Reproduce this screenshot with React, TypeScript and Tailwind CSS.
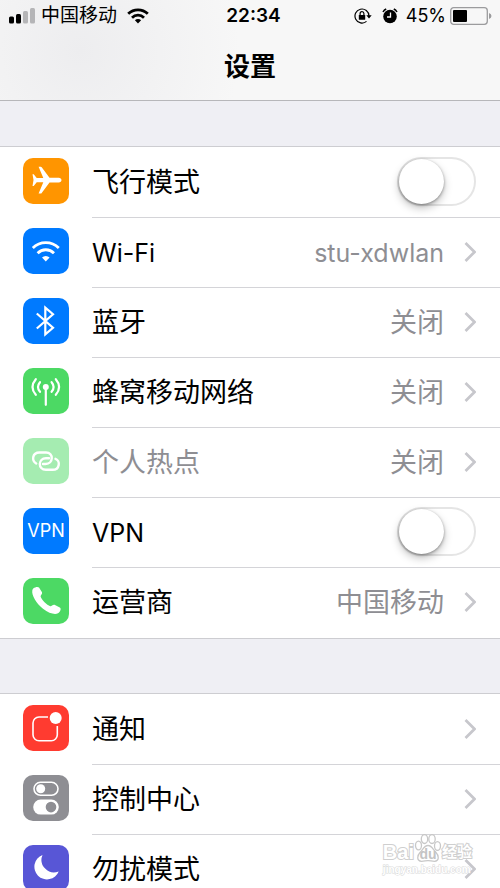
import type { ReactNode } from "react";
import { clsx } from "clsx";

type Row = {
  id: string;
  label: string;
  color: string;
  icon: ReactNode;
  value?: string;
  toggle?: boolean;
  disabled?: boolean;
  latin?: boolean;
};

const PlaneIcon = () => (
  <svg viewBox="0 0 46 46" className="size-full" fill="#fff">
    <path d="M9.5 16.2h1.2l3 3.7h6.6L15.6 8.8h2.2q.5 0 .9.5l7.8 10.4h9.2c1.7 0 2.8 1.2 2.8 2.4s-1.1 2.4-2.8 2.4h-9.2l-7.8 10.4q-.4.5-.9.5h-2.2l4.7-11.1h-6.6l-3 3.7H9.5l1-5.9z" />
  </svg>
);

const WifiIcon = () => (
  <svg viewBox="0 0 46 46" className="size-full" fill="none" stroke="#fff" strokeWidth="2.8">
    <path d="M9.8 20A18.6 18.6 0 0 1 35.8 20" />
    <path d="M14.6 25.2A11.5 11.5 0 0 1 31 25.2" />
    <path d="M19 29.6a5.4 5.4 0 0 1 7.6 0L22.8 33.5z" fill="#fff" stroke="none" />
  </svg>
);

const BluetoothIcon = () => (
  <svg viewBox="0 0 46 46" className="size-full" fill="none" stroke="#fff" strokeWidth="2.2">
    <path d="M13.8 15.5L30 29.8L22.3 36.3V9.7L30 16.2L13.8 30.5" />
  </svg>
);

const CellularIcon = () => (
  <svg viewBox="0 0 46 46" className="size-full" fill="none" stroke="#fff" strokeWidth="2.2" strokeLinecap="round">
    <circle cx="22.8" cy="19" r="3" fill="#fff" stroke="none" />
    <path d="M22.8 20V36.8" />
    <path d="M17 14.2q-4 4.8 0 9.6M28.6 14.2q4 4.8 0 9.6" />
    <path d="M12.8 11.2q-6.6 7.8 0 15.6M32.8 11.2q6.6 7.8 0 15.6" />
  </svg>
);

const HotspotIcon = () => (
  <svg viewBox="0 0 46 46" className="size-full" fill="none" stroke="#fff" strokeWidth="2.4" strokeLinecap="round">
    <path d="M13.2 25.5C8.5 23 9 14.5 16.5 14.5H23C31 14.5 30.5 26 22.5 26H20" />
    <path d="M32.5 20.8C37.5 22.5 37 31.8 29.5 31.8H23C14.5 31.8 15 20.2 23 20.2H26" />
  </svg>
);

const PhoneIcon = () => (
  <svg viewBox="0 0 46 46" className="size-full" fill="#fff">
    <path d="M10.5 10.3C12 9 15 8.3 16 9.5L19 14.3C19.7 16 17.4 17.3 17.6 18.5C18.5 22 24 27 27.2 28.2C28.6 28.5 29.6 26.4 31.5 26.8L36.8 29.5C38.7 30.8 37.2 33.8 35 35.3C32 37 26 35.5 20 30.8C13 25 8.5 17.3 9.3 12.5C9.4 11.6 9.8 10.8 10.5 10.3z" />
  </svg>
);

const NotificationIcon = () => (
  <svg viewBox="0 0 46 46" className="size-full" fill="none" stroke="#fff" strokeWidth="1.6">
    <path d="M25 12H16a6 6 0 0 0-6 6V29.7a6 6 0 0 0 6 6H28.3a6 6 0 0 0 6-6V21" />
    <circle cx="32.7" cy="13" r="6" fill="#fff" stroke="none" />
  </svg>
);

const ControlIcon = () => (
  <svg viewBox="0 0 46 46" className="size-full">
    <rect x="11" y="7.3" width="24" height="13" rx="6.5" fill="none" stroke="#fff" strokeWidth="1.6" />
    <circle cx="17.7" cy="13.8" r="4.5" fill="#fff" />
    <rect x="10.2" y="24.6" width="25.6" height="15" rx="7.5" fill="#fff" />
    <circle cx="28" cy="32.1" r="5.3" fill="#8e8e93" />
  </svg>
);

const MoonIcon = () => (
  <svg viewBox="0 0 46 46" className="size-full" fill="#fff">
    <path d="M19.5 10A12.6 12.6 0 1 0 35.7 26.4A12.5 12.5 0 0 1 19.5 10z" />
  </svg>
);

const network: Row[] = [
  { id: "airplane", label: "飞行模式", color: "bg-[#ff9500]", icon: <PlaneIcon />, toggle: true },
  { id: "wifi", label: "Wi-Fi", color: "bg-[#007aff]", icon: <WifiIcon />, value: "stu-xdwlan", latin: true },
  { id: "bluetooth", label: "蓝牙", color: "bg-[#007aff]", icon: <BluetoothIcon />, value: "关闭" },
  { id: "cellular", label: "蜂窝移动网络", color: "bg-[#4cd964]", icon: <CellularIcon />, value: "关闭" },
  { id: "hotspot", label: "个人热点", color: "bg-[#a5ecb1]", icon: <HotspotIcon />, value: "关闭", disabled: true },
  { id: "vpn", label: "VPN", color: "bg-[#007aff]", icon: "VPN", toggle: true, latin: true },
  { id: "carrier", label: "运营商", color: "bg-[#4cd964]", icon: <PhoneIcon />, value: "中国移动" },
];

const system: Row[] = [
  { id: "notifications", label: "通知", color: "bg-[#ff3b30]", icon: <NotificationIcon /> },
  { id: "control", label: "控制中心", color: "bg-[#8e8e93]", icon: <ControlIcon /> },
  { id: "dnd", label: "勿扰模式", color: "bg-[#5856d6]", icon: <MoonIcon /> },
];

function StatusBar() {
  return (
    <div className="grid h-8 grid-cols-[1fr_auto_1fr] items-center pr-2 pl-[9px] text-lg leading-8">
      <div className="flex items-center">
        <svg viewBox="0 0 26 16" className="h-4 w-[26px]">
          <rect x="0" y="8.5" width="5" height="7" rx="1.5" />
          <rect x="7" y="6" width="5" height="9.5" rx="1.5" />
          <rect x="14" y="3" width="5" height="12.5" rx="1.5" fill="#b5b5b7" />
          <rect x="21" y="0" width="5" height="15.5" rx="1.5" fill="#b5b5b7" />
        </svg>
        <span className="ml-1.5 text-[19px]">中国移动</span>
        <svg viewBox="0 0 22 16" className="ml-2.5 h-4 w-[22px]" fill="none" stroke="#000" strokeWidth="2.8">
          <path d="M1.2 5.8A14 14 0 0 1 20.8 5.8" />
          <path d="M5 9.7A8.5 8.5 0 0 1 17 9.7" />
          <path d="M7.9 12.3a4.4 4.4 0 0 1 6.2 0L11 15.5z" fill="#000" stroke="none" />
        </svg>
      </div>
      <time className="pl-1.5 text-[19px] font-semibold">22:34</time>
      <div className="flex items-center justify-end">
        <svg viewBox="0 0 18 16" className="h-4 w-[18px]" fill="none" stroke="#000" strokeWidth="1.2">
          <path d="M15 8A7 7 0 1 0 12.5 13.4" />
          <path d="M12.3 7.2h5.4L15 10.6z" fill="#000" stroke="none" />
          <rect x="4.8" y="7" width="6.4" height="4.8" rx="0.6" fill="#000" stroke="none" />
          <path d="M6.1 7.2V5.6a1.9 1.9 0 0 1 3.8 0V7.2" />
        </svg>
        <svg viewBox="0 0 16 16" className="ml-2.5 size-4" fill="none" stroke="#000">
          <circle cx="8" cy="8.5" r="6.8" fill="#000" stroke="none" />
          <path d="M1 4A7 7 0 0 1 4.2 1M11.8 1A7 7 0 0 1 15 4" strokeWidth="1.5" />
          <path d="M8.5 4.5V9H5" stroke="#f7f7f7" strokeWidth="1.3" />
        </svg>
        <span className="ml-2">45%</span>
        <svg viewBox="0 0 42 18" className="ml-1 h-[18px] w-[42px]">
          <rect x="0.7" y="0.7" width="36.6" height="16.6" rx="3" fill="none" stroke="#9b9b9d" strokeWidth="1.3" />
          <rect x="3" y="3" width="14" height="12" rx="1" />
          <path d="M39 6v6q2.5-1 2.5-3T39 6z" fill="#9b9b9d" />
        </svg>
      </div>
    </div>
  );
}

function SettingsRow({ row, last }: { row: Row; last: boolean }) {
  const content = (
    <>
      <span
        className={clsx(
          "mt-2.5 flex size-[46px] shrink-0 items-center justify-center overflow-hidden rounded-[10px] text-lg text-white",
          row.color
        )}
      >
        {row.icon}
      </span>
      <span
        className={clsx(
          "ml-[23px] flex h-[70px] flex-1 items-center border-b pr-6 pb-0.5",
          row.latin && "text-[25px]",
          last ? "border-transparent" : "border-[#d4d4d8]"
        )}
      >
        <span className={clsx("flex-1 pt-0.5 text-left", row.disabled ? "text-[#8e8e93]" : "text-black")}>
          {row.label}
        </span>
        {row.value && <span className="pt-0.5 text-[#8e8e93]">{row.value}</span>}
        {row.toggle ? (
          <input
            id={row.id}
            type="checkbox"
            role="switch"
            className="h-[49px] w-[79px] shrink-0 appearance-none rounded-full border-2 border-[#e5e5e5] bg-white before:block before:size-[45px] before:rounded-full before:bg-white before:shadow-[0_4px_8px_rgba(0,0,0,0.25),0_1px_3px_rgba(0,0,0,0.35)] checked:bg-[#4cd964] checked:before:ml-[30px]"
          />
        ) : (
          <svg viewBox="0 0 12 20" className="ml-5 h-5 w-3 shrink-0" fill="none" stroke="#c7c7cc" strokeWidth="2.7">
            <path d="M1.5 1L10.5 10L1.5 19" />
          </svg>
        )}
      </span>
    </>
  );

  return (
    <li>
      {row.toggle ? (
        <label htmlFor={row.id} className="flex w-full pl-[23px]">
          {content}
        </label>
      ) : (
        <button type="button" disabled={row.disabled} className="flex w-full pl-[23px]">
          {content}
        </button>
      )}
    </li>
  );
}

function Group({ rows }: { rows: Row[] }) {
  return (
    <ul className="border-y border-[#cdcdd1] bg-white pt-px">
      {rows.map((row, i) => (
        <SettingsRow key={row.id} row={row} last={i === rows.length - 1} />
      ))}
    </ul>
  );
}

function Watermark() {
  return (
    <div className="pointer-events-none absolute right-7 bottom-2.5 font-['Liberation_Sans','Noto_Sans_CJK_SC',sans-serif] font-bold whitespace-nowrap text-white [-webkit-text-stroke:2px_#cfcfcf] [paint-order:stroke_fill]">
      <div className="flex h-7 items-end">
        <span className="text-xl leading-5">Bai</span>
        <span className="relative flex size-7 shrink-0 items-end justify-center text-sm leading-4">
          <svg
            viewBox="0 0 28 28"
            className="absolute inset-0 size-7 [paint-order:normal]"
            fill="#fff"
            stroke="#c8c8c8"
            strokeWidth="1.3"
          >
            <ellipse cx="4.5" cy="11.5" rx="3" ry="4.3" />
            <ellipse cx="10.5" cy="5" rx="3.2" ry="4.5" />
            <ellipse cx="18" cy="5" rx="3.2" ry="4.5" />
            <ellipse cx="23.5" cy="12" rx="3" ry="4.3" />
            <path d="M14 11.5c4 0 5 4 8 7s3.5 8.500-1.500 8.800c-3 0-4-.6-6.500-.6s-3.500.6-6.500.6c-5-.3-4.500-5.800-1.500-8.800s4-7 8-7z" />
          </svg>
          <span className="relative text-[#c4c4c4] [-webkit-text-stroke:0]">du</span>
        </span>
        <span className="text-[15px] leading-5">经验</span>
      </div>
      <div className="text-[10px] leading-4 [-webkit-text-stroke:1px_#d8d8d8]">jingyan.baidu.com</div>
    </div>
  );
}

export default function App() {
  return (
    <main className="relative h-screen overflow-hidden bg-[#efeff4] font-['Inter','Noto_Sans_CJK_SC',sans-serif] text-black">
      <header className="border-b border-[#b7b7ba] bg-[#f7f7f7] bg-[radial-gradient(circle_at_16%_50%,#ededef_0%,#f7f7f7_160px)]">
        <StatusBar />
        <h1 className="flex h-[68px] items-center justify-center text-[26px] font-bold">设置</h1>
      </header>
      <div className="flex flex-col gap-[54px] pt-[45px] text-[27px] leading-10">
        <Group rows={network} />
        <Group rows={system} />
      </div>
      <Watermark />
    </main>
  );
}
